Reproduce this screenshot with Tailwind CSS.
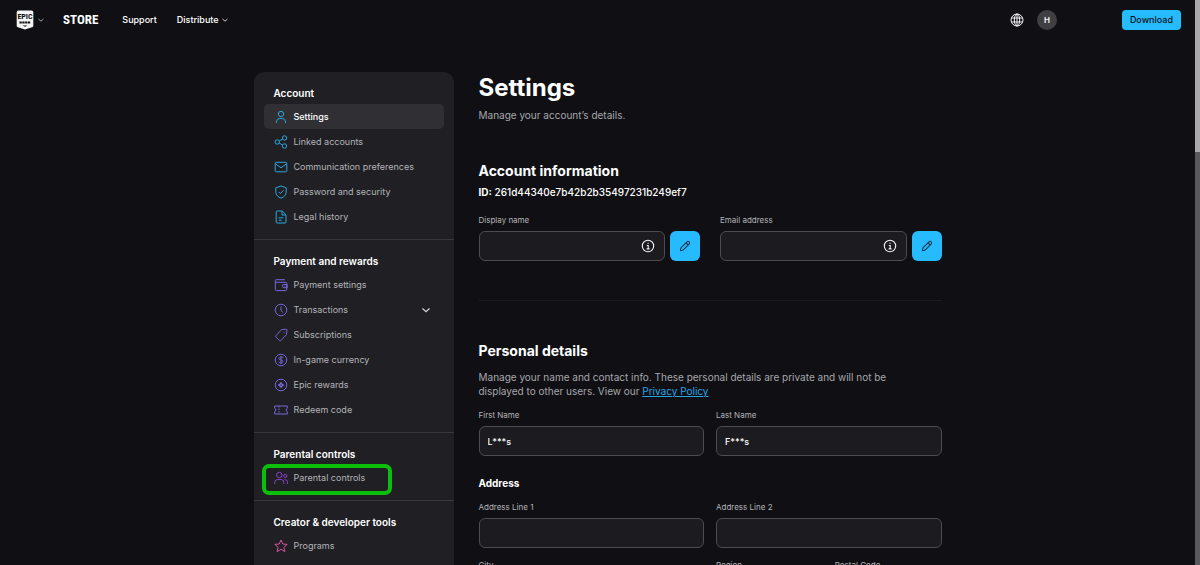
<!DOCTYPE html>
<html lang="en">
<head>
    <meta charset="UTF-8">
    <meta name="viewport" content="width=device-width, initial-scale=1.0">
    <title>Account Settings</title>
    <script src="https://cdn.jsdelivr.net/npm/@tailwindcss/browser@4"></script>
</head>
<body class="bg-[#101014] text-white font-['Inter',sans-serif] antialiased">
<div class="relative h-screen overflow-hidden pr-[5px]">

    <!-- Top bar -->
    <header class="flex h-10 items-center pl-4 pr-[14px] text-[9px] font-medium">
        <button class="flex items-center gap-px" aria-label="Epic Games menu">
            <svg class="h-5 w-[18px]" viewBox="0 0 18 20">
                <path fill="#f4f4f5" d="M2.5 0.5h13a1.8 1.8 0 0 1 1.8 1.8v13.2c0 .9-.3 1.3-1.2 1.7L9 19.6l-7.1-2.4c-.9-.4-1.2-.8-1.2-1.7V2.3A1.8 1.8 0 0 1 2.500.5z"/>
                <text x="9" y="9.300" text-anchor="middle" class="font-['Roboto_Condensed','Liberation_Sans_Narrow','Liberation_Sans',sans-serif] text-[8px] font-bold" fill="#101014">EPIC</text>
                <path stroke="#101014" stroke-width="1.800" stroke-dasharray="2.300 .5" d="M3.500 12.500h11"/>
                <path fill="#101014" d="M6.500 15.500h5L9 16.800z"/>
            </svg>
            <svg class="size-3" viewBox="0 0 12 12" fill="none" stroke="#a1a1a6" stroke-width="1"><path d="M3.500 5 6 7.200 8.500 5"/></svg>
        </button>
        <a href="#" class="ml-4 font-['Roboto_Condensed','Liberation_Sans_Narrow','Liberation_Sans',sans-serif] text-[13px] font-bold">STORE</a>
        <nav class="ml-6 flex items-center gap-5">
            <a href="#">Support</a>
            <button class="flex items-center">Distribute
                <svg class="size-3" viewBox="0 0 12 12" fill="none" stroke="#c4c4c8" stroke-width="1"><path d="M3.500 5 6 7.200 8.500 5"/></svg>
            </button>
        </nav>
        <div class="ml-auto flex items-center">
            <button aria-label="Language">
                <svg class="size-[14px]" viewBox="0 0 14 14" fill="none" stroke="#f4f4f5" stroke-width="1">
                    <circle cx="7" cy="7" r="6"/>
                    <ellipse cx="7" cy="7" rx="2.700" ry="6"/>
                    <path d="M7 1v12M1.500 5h11M1.500 9h11"/>
                </svg>
            </button>
            <button class="ml-[13px] size-5 rounded-full bg-[#404044] text-[8px] font-semibold">H</button>
            <button class="ml-[65px] h-5 rounded-[4px] bg-[#26bbff] px-2 font-medium text-[#101014]">Download</button>
        </div>
    </header>

    <div class="mx-auto mt-8 flex max-w-[688px] items-start gap-[25px]">

        <!-- Side menu -->
        <aside class="w-[200px] shrink-0 rounded-t-[10px] bg-[#202024] text-[9px] text-[#b3b3b8]">
            <section class="border-b border-[#38383c] px-[10px] pt-[11px] pb-[10px]">
                <h2 class="pl-[10px] text-[10px] leading-[21px] font-semibold text-white">Account</h2>
                <ul>
                    <li><a href="#" class="flex h-[25px] items-center gap-[6px] rounded-[5px] bg-[#303034] pl-[10px] font-medium text-white">
                        <svg class="size-[14px]" viewBox="0 0 14 14" fill="none" stroke="#2ba6dc" stroke-width="1"><circle cx="7" cy="4" r="2.700"/><path d="M2.500 13v-1.200A3.300 3.300 0 0 1 5.800 8.500h2.400a3.300 3.300 0 0 1 3.300 3.300V13"/></svg>
                        Settings</a></li>
                    <li><a href="#" class="flex h-[25px] items-center gap-[6px] pl-[10px]">
                        <svg class="size-[14px]" viewBox="0 0 14 14" fill="none" stroke="#2ba6dc" stroke-width="1"><circle cx="3.200" cy="7" r="2.200"/><circle cx="10.500" cy="3" r="2.200"/><circle cx="10.500" cy="11" r="2.200"/><path d="m5.200 6 3.300-2M5.200 8l3.300 2"/></svg>
                        Linked accounts</a></li>
                    <li><a href="#" class="flex h-[25px] items-center gap-[6px] pl-[10px]">
                        <svg class="size-[14px]" viewBox="0 0 14 14" fill="none" stroke="#2ba6dc" stroke-width="1"><rect x="1.200" y="2.300" width="11.600" height="9.500" rx="1"/><path d="M1.500 3.800 7 7.800l5.500-4"/></svg>
                        Communication preferences</a></li>
                    <li><a href="#" class="flex h-[25px] items-center gap-[6px] pl-[10px]">
                        <svg class="size-[14px]" viewBox="0 0 14 14" fill="none" stroke="#2ba6dc" stroke-width="1"><path d="M7 1 12.200 2.800v4.400c0 2.800-2.200 4.800-5.200 6-3-1.200-5.200-3.200-5.200-6V2.800z"/><path d="m4.800 7 1.600 1.600 3-3.200"/></svg>
                        Password and security</a></li>
                    <li><a href="#" class="flex h-[25px] items-center gap-[6px] pl-[10px]">
                        <svg class="size-[14px]" viewBox="0 0 14 14" fill="none" stroke="#2ba6dc" stroke-width="1"><path d="M3.200 1h5l3.800 3.800V12a1 1 0 0 1-1 1H3.200a1 1 0 0 1-1-1V2a1 1 0 0 1 1-1z"/><path d="M8 1.200V5h3.800M4.700 7.800h4.600M4.700 10.200h3"/></svg>
                        Legal history</a></li>
                </ul>
            </section>

            <section class="border-b border-[#38383c] px-[10px] pt-[11px] pb-[10px]">
                <h2 class="pl-[10px] text-[10px] leading-[21px] font-semibold text-white">Payment and rewards</h2>
                <ul>
                    <li><a href="#" class="flex h-[25px] items-center gap-[6px] pl-[10px]">
                        <svg class="size-[14px]" viewBox="0 0 14 14" fill="none" stroke="#7566dc" stroke-width="1"><path d="M11 1.700H2.200a.9.9 0 0 0-.9.900v9.100c0 .5.400.9.900.9h9.600c.5 0 .9-.4.900-.9V5.200a.9.9 0 0 0-.9-.9H1.500"/><path d="M13.200 6.500H9.800a1.500 1.500 0 0 0-1.500 1.900 1.700 1.700 0 0 0 1.500 1.300h3.400z"/><path d="M10 8.100h.8"/></svg>
                        Payment settings</a></li>
                    <li><button class="flex h-[25px] w-full items-center gap-[6px] pr-[11px] pl-[10px]">
                        <svg class="size-[14px]" viewBox="0 0 14 14" fill="none" stroke="#7566dc" stroke-width="1"><circle cx="7" cy="7" r="5.800"/><path d="M7 3.500V7l1.700 2.500"/></svg>
                        Transactions
                        <svg class="ml-auto size-[14px]" viewBox="0 0 14 14" fill="none" stroke="#d4d4d8" stroke-width="1.200"><path d="m3.500 5.500 3.500 3.300 3.500-3.300"/></svg>
                    </button></li>
                    <li><a href="#" class="flex h-[25px] items-center gap-[6px] pl-[10px]">
                        <svg class="size-[14px]" viewBox="0 0 14 14" fill="none" stroke="#7566dc" stroke-width="1"><path d="M8 1.600 12 1.200a.8.8 0 0 1 .9.900l-.4 4a1.500 1.500 0 0 1-.4.900l-5 5.400a1.200 1.200 0 0 1-1.700 0L2.100 9.200a1.200 1.200 0 0 1 0-1.700L7 2.100a1.500 1.500 0 0 1 1-.5z"/><path d="M9.500 4.500h.8"/></svg>
                        Subscriptions</a></li>
                    <li><a href="#" class="flex h-[25px] items-center gap-[6px] pl-[10px]">
                        <svg class="size-[14px]" viewBox="0 0 14 14" fill="none" stroke="#7566dc" stroke-width="1"><circle cx="7" cy="7" r="5.800"/><path d="M9 5.200C8.800 4.400 8 4 7 4c-1.200 0-2 .6-2 1.500C5 7.600 9 6.400 9 8.600 9 9.500 8.200 10 7 10c-1.100 0-1.900-.5-2.100-1.300M7 3v8"/></svg>
                        In-game currency</a></li>
                    <li><a href="#" class="flex h-[25px] items-center gap-[6px] pl-[10px]">
                        <svg class="size-[14px]" viewBox="0 0 14 14" fill="none" stroke="#7566dc" stroke-width="1"><circle cx="7" cy="7" r="5.800"/><path stroke-width="1.300" d="M7 4.300C7.300 6.100 7.900 6.700 9.700 7 7.900 7.300 7.300 7.900 7 9.700 6.700 7.900 6.100 7.300 4.300 7 6.100 6.700 6.700 6.100 7 4.300z"/></svg>
                        Epic rewards</a></li>
                    <li><a href="#" class="flex h-[25px] items-center gap-[6px] pl-[10px]">
                        <svg class="size-[14px]" viewBox="0 0 14 14" fill="none" stroke="#7566dc" stroke-width="1"><path d="M.7 3h12.600v2.300a1.800 1.800 0 0 0 0 3.400V11H.7V8.700a1.800 1.800 0 0 0 0-3.400z"/><path stroke-dasharray="1.500 1" d="M5 3v8"/></svg>
                        Redeem code</a></li>
                </ul>
            </section>

            <section class="border-b border-[#38383c] px-[10px] pt-[11px] pb-[10px]">
                <h2 class="pl-[10px] text-[10px] leading-[21px] font-semibold text-white">Parental controls</h2>
                <ul>
                    <li class="relative"><a href="#" class="flex h-[25px] items-center gap-[6px] pl-[10px]">
                        <svg class="size-[14px]" viewBox="0 0 14 14" fill="none" stroke="#8b3fd0" stroke-width="1"><circle cx="5.300" cy="4" r="2.700"/><circle cx="11.300" cy="5" r="1.600"/><path d="M.7 13v-1.500a3 3 0 0 1 3-3h3.200a3 3 0 0 1 3 3V13M10.500 8.700h.6a2.400 2.400 0 0 1 2.400 2.400V13"/></svg>
                        Parental controls</a>
                        <span class="pointer-events-none absolute -top-px -left-[2px] h-[31px] w-[130px] rounded-[7px] border-4 border-[#0bbf0b]"></span></li>
                </ul>
            </section>

            <section class="px-[10px] pt-[11px] pb-[10px]">
                <h2 class="pl-[10px] text-[10px] leading-[21px] font-semibold text-white">Creator &amp; developer tools</h2>
                <ul>
                    <li><a href="#" class="flex h-[25px] items-center gap-[6px] pl-[10px]">
                        <svg class="size-[14px]" viewBox="0 0 14 14" fill="none" stroke="#d9539f" stroke-width="1" stroke-linejoin="round"><path d="m7 1 1.800 4 4.400.4-3.300 2.900 1 4.300L7 10.300l-3.900 2.300 1-4.300L.8 5.400 5.200 5z"/></svg>
                        Programs</a></li>
                </ul>
            </section>
        </aside>

        <!-- Settings form -->
        <main class="min-w-0 flex-1">
            <h1 class="text-[24px] leading-8 font-bold">Settings</h1>
            <p class="mt-1 text-[10px] leading-[14px] text-[#a6a6ab]">Manage your account’s details.</p>

            <h2 class="mt-[39px] text-[14px] leading-5 font-bold">Account information</h2>
            <p class="mt-1 text-[10px] leading-[14px] font-medium"><b class="font-bold">ID:</b> 261d44340e7b42b2b35497231b249ef7</p>

            <div class="mt-[15px] grid grid-cols-2 gap-5">
                <div>
                    <label for="display-name" class="block text-[8px] leading-3 text-[#b3b3b8]">Display name</label>
                    <div class="mt-[5px] flex gap-[5px]">
                        <div class="relative flex-1">
                            <input id="display-name" type="text" class="h-[30px] w-full rounded-[6px] border border-[#4b4b50] bg-[#1c1c20] pr-7 pl-2 text-[9px]">
                            <svg class="absolute top-2 right-[10px] size-[14px]" viewBox="0 0 14 14" fill="none" stroke="#f4f4f5" stroke-width="1.100"><circle cx="7" cy="7" r="5.700"/><path d="M5.800 6.500h1.400v3.300M5.600 9.900h3M6.500 4.300h1.200"/></svg>
                        </div>
                        <button class="flex size-[30px] items-center justify-center rounded-[6px] bg-[#26bbff]" aria-label="Edit display name">
                            <svg class="size-3" viewBox="0 0 14 14" fill="none" stroke="#12303f" stroke-width="1.200" stroke-linejoin="round"><path d="M2.200 9.300 9.300 2.200a1.700 1.700 0 0 1 2.500 2.500L4.700 11.800l-2.200.6a.6.6 0 0 1-.8-.8zM8.200 3.400l2.400 2.400"/></svg>
                        </button>
                    </div>
                </div>
                <div>
                    <label for="email" class="block text-[8px] leading-3 text-[#b3b3b8]">Email address</label>
                    <div class="mt-[5px] flex gap-[5px]">
                        <div class="relative flex-1">
                            <input id="email" type="email" class="h-[30px] w-full rounded-[6px] border border-[#4b4b50] bg-[#1c1c20] pr-7 pl-2 text-[9px]">
                            <svg class="absolute top-2 right-[10px] size-[14px]" viewBox="0 0 14 14" fill="none" stroke="#f4f4f5" stroke-width="1.100"><circle cx="7" cy="7" r="5.700"/><path d="M5.800 6.500h1.400v3.300M5.600 9.900h3M6.500 4.300h1.200"/></svg>
                        </div>
                        <button class="flex size-[30px] items-center justify-center rounded-[6px] bg-[#26bbff]" aria-label="Edit email address">
                            <svg class="size-3" viewBox="0 0 14 14" fill="none" stroke="#12303f" stroke-width="1.200" stroke-linejoin="round"><path d="M2.200 9.300 9.300 2.200a1.700 1.700 0 0 1 2.500 2.500L4.700 11.800l-2.200.6a.6.6 0 0 1-.8-.8zM8.200 3.400l2.400 2.400"/></svg>
                        </button>
                    </div>
                </div>
            </div>

            <hr class="mt-[39px] border-[#1c1c20]">

            <h2 class="mt-10 text-[14px] leading-5 font-bold">Personal details</h2>
            <p class="mt-[9px] text-[10px] leading-[14px] text-[#a6a6ab]">Manage your name and contact info. These personal details are private and will not be<br>displayed to other users. View our <a href="#" class="text-[#26a5e4] underline">Privacy Policy</a></p>

            <div class="mt-[11px] grid grid-cols-2 gap-3">
                <div>
                    <label for="first-name" class="block text-[8px] leading-3 text-[#b3b3b8]">First Name</label>
                    <input id="first-name" type="text" value="L***s" class="mt-[5px] h-[30px] w-full rounded-[6px] border border-[#4b4b50] bg-[#1c1c20] px-2 text-[9px] font-medium">
                </div>
                <div>
                    <label for="last-name" class="block text-[8px] leading-3 text-[#b3b3b8]">Last Name</label>
                    <input id="last-name" type="text" value="F***s" class="mt-[5px] h-[30px] w-full rounded-[6px] border border-[#4b4b50] bg-[#1c1c20] px-2 text-[9px] font-medium">
                </div>
            </div>

            <h3 class="mt-5 text-[10px] leading-[14px] font-bold">Address</h3>
            <div class="mt-[11px] grid grid-cols-4 gap-x-3 gap-y-[11px]">
                <div class="col-span-2">
                    <label for="address-1" class="block text-[8px] leading-3 text-[#b3b3b8]">Address Line 1</label>
                    <input id="address-1" type="text" class="mt-[5px] h-[30px] w-full rounded-[6px] border border-[#4b4b50] bg-[#1c1c20] px-2 text-[9px]">
                </div>
                <div class="col-span-2">
                    <label for="address-2" class="block text-[8px] leading-3 text-[#b3b3b8]">Address Line 2</label>
                    <input id="address-2" type="text" class="mt-[5px] h-[30px] w-full rounded-[6px] border border-[#4b4b50] bg-[#1c1c20] px-2 text-[9px]">
                </div>
                <div class="col-span-2">
                    <label for="city" class="block text-[8px] leading-3 text-[#b3b3b8]">City</label>
                    <input id="city" type="text" class="mt-[5px] h-[30px] w-full rounded-[6px] border border-[#4b4b50] bg-[#1c1c20] px-2 text-[9px]">
                </div>
                <div>
                    <label for="region" class="block text-[8px] leading-3 text-[#b3b3b8]">Region</label>
                    <input id="region" type="text" class="mt-[5px] h-[30px] w-full rounded-[6px] border border-[#4b4b50] bg-[#1c1c20] px-2 text-[9px]">
                </div>
                <div>
                    <label for="postal-code" class="block text-[8px] leading-3 text-[#b3b3b8]">Postal Code</label>
                    <input id="postal-code" type="text" class="mt-[5px] h-[30px] w-full rounded-[6px] border border-[#4b4b50] bg-[#1c1c20] px-2 text-[9px]">
                </div>
            </div>
        </main>
    </div>

    <!-- Scrollbar -->
    <div class="absolute inset-y-0 right-0 w-[5px] bg-[#59595c]">
        <div class="h-[152px] bg-[#a9a9ab]"></div>
    </div>
</div>
</body>
</html>
